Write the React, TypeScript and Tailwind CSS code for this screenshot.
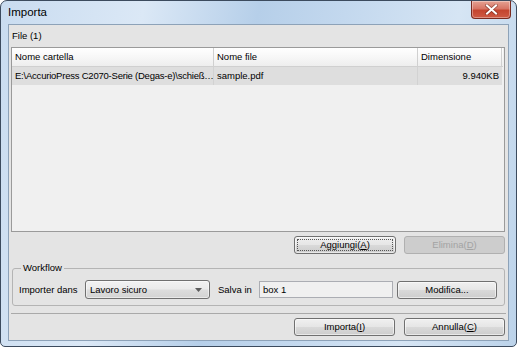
import type { ReactNode } from 'react';

const ui = "font-['Liberation_Sans',Arial,sans-serif] text-[9.5px] leading-[12px] text-black";

const btnBase =
  'flex items-center justify-center rounded-[3px] border shadow-[inset_0_0_0_1px_rgba(255,255,255,0.55)]';
const btnNormal =
  'border-[#707070] bg-[linear-gradient(#f0f0f0_0%,#e6e6e6_48%,#d9d9d9_52%,#cdcdcd_100%)] text-black';
const btnDisabled = 'border-[#b0b0b0] bg-[#cdcdcd] text-[#a3a3a3] shadow-none';

type BtnProps = {
  children: ReactNode;
  className?: string;
  disabled?: boolean;
  focused?: boolean;
};

const WinButton = ({ children, className = '', disabled, focused }: BtnProps) => (
  <button
    type="button"
    disabled={disabled}
    className={`${btnBase} ${disabled ? btnDisabled : btnNormal} ${
      focused ? 'outline-1 outline-offset-[-4px] outline-dotted outline-[#555555]' : ''
    } ${className}`}
  >
    {children}
  </button>
);

const Mnemonic = ({ label, k }: { label: string; k: string }) => (
  <span>
    {label}(<span className="underline underline-offset-1">{k}</span>)
  </span>
);

const CloseButton = () => (
  <div className="flex h-[18px] w-[40px] items-center justify-center rounded-b-[4px] border border-t-0 border-[#7a2a1f] bg-[linear-gradient(#e5a293_0%,#d77565_45%,#c4452f_55%,#cf5a44_100%)] shadow-[inset_0_0_0_1px_rgba(255,255,255,0.35)]">
    <svg width="13" height="11" viewBox="0 0 13 11">
      <path
        d="M2 1.5 L11 9.5 M11 1.5 L2 9.5"
        stroke="#5a1a10"
        strokeWidth="3.6"
        strokeLinecap="square"
        opacity="0.5"
      />
      <path d="M2 1.5 L11 9.5 M11 1.5 L2 9.5" stroke="#ffffff" strokeWidth="2" strokeLinecap="square" />
    </svg>
  </div>
);

const columns = [
  { label: 'Nome cartella', w: 'w-[202px]' },
  { label: 'Nome file', w: 'w-[204px]' },
  { label: 'Dimensione', w: 'w-[84px]' },
];

const FileTable = () => (
  <div className="ml-[2px] flex h-[185px] w-[494px] flex-col border border-[#9a9a9a] bg-[#f0f0f0]">
    <div className="flex h-[19px] w-[491px] border-b border-[#d0d0d0] bg-[linear-gradient(#ffffff_0%,#f7f7f7_50%,#eeeeee_100%)]">
      {columns.map((c) => (
        <div key={c.label} className={`${c.w} flex items-center border-r border-[#d0d0d0] pl-[3px]`}>
          {c.label}
        </div>
      ))}
    </div>
    <div className="flex h-[18px] w-[490px] bg-[#dedede]">
      <div className="flex w-[202px] items-center overflow-hidden border-r border-[#d2d2d2] pl-[3px] whitespace-nowrap tracking-[-0.22px]">
        E:\AccurioPress C2070-Serie (Degas-e)\schieß…
      </div>
      <div className="flex w-[204px] items-center border-r border-[#d2d2d2] pl-[3px]">sample.pdf</div>
      <div className="flex w-[84px] items-center justify-end pr-[3px]">9.940KB</div>
    </div>
  </div>
);

const Combo = () => (
  <div className="flex h-[19px] w-[125px] items-center justify-between rounded-[3px] border border-[#707070] bg-[linear-gradient(#f2f2f2_0%,#ebebeb_48%,#dddddd_52%,#d3d3d3_100%)] pl-[4px] pr-[7px] shadow-[inset_0_0_0_1px_rgba(255,255,255,0.5)]">
    <span>Lavoro sicuro</span>
    <svg width="7" height="4" viewBox="0 0 7 4">
      <path d="M0 0 H7 L3.5 4 Z" fill="#5c5c5c" />
    </svg>
  </div>
);

export default function App() {
  return (
    <div className={`${ui} h-[347px] w-[517px] overflow-hidden`}>
      <div className="flex h-full w-full flex-col rounded-t-[7px] rounded-b-[5px] border border-[#3c4b5e] bg-[linear-gradient(100deg,#c9dcf0_0%,#dbe8f6_25%,#b6cfe9_45%,#c3d8ee_60%,#d6e5f4_80%,#bcd3ea_100%)]">
        <div className="flex h-[23px] items-start justify-between pl-[7px] pr-[5px]">
          <span className="mt-[5px] font-['Liberation_Sans',Arial,sans-serif] text-[11.5px] leading-[13px] text-black">
            Importa
          </span>
          <CloseButton />
        </div>
        <div className="mx-[7px] flex h-[317px] flex-col border border-[#8da2b8] bg-[#e4e4e4]">
          <div className="flex h-[22px] items-center pl-[3px]">File (1)</div>
          <FileTable />
          <div className="mt-[4px] flex justify-end gap-[8px] pr-[3px]">
            <WinButton focused className="h-[18px] w-[102px]">
              <Mnemonic label="Aggiungi" k="A" />
            </WinButton>
            <WinButton disabled className="h-[18px] w-[101px]">
              <Mnemonic label="Elimina" k="D" />
            </WinButton>
          </div>
          <fieldset className="mt-[8px] ml-[3px] w-[493px] rounded-[3px] border border-[#b4b4b4] px-[6px] pt-[6px] pb-[6px]">
            <legend className="ml-[2px] px-[2px]">Workflow</legend>
            <div className="flex items-center">
              <span className="w-[66px]">Importer dans</span>
              <Combo />
              <span className="ml-[8px] w-[41px]">Salva in</span>
              <div className="flex h-[17px] w-[134px] items-center border border-[#abadb3] bg-[#f0f0f0] pl-[3px]">
                box 1
              </div>
              <WinButton className="ml-[4px] h-[18px] w-[100px]">Modifica...</WinButton>
            </div>
          </fieldset>
          <div className="mt-[7px] ml-[2px] w-[495px] border-t border-[#a9a9a9]" />
          <div className="mt-[4px] flex justify-end gap-[9px] pr-[3px]">
            <WinButton className="h-[18px] w-[101px]">
              <Mnemonic label="Importa" k="I" />
            </WinButton>
            <WinButton className="h-[18px] w-[101px]">
              <Mnemonic label="Annulla" k="C" />
            </WinButton>
          </div>
        </div>
      </div>
    </div>
  );
}
